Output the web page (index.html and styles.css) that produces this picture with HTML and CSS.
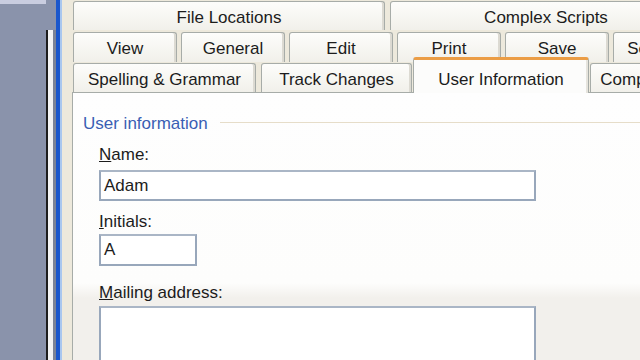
FILE: index.html
```html
<!DOCTYPE html>
<html lang="en">
<head>
    <meta charset="UTF-8">
    <meta name="viewport" content="width=device-width, initial-scale=1.0">
    <title>Options</title>
    <link rel="stylesheet" href="styles.css">
</head>
<body>

    <div class="desktop">
        <div class="desktop-strip"></div>
    </div>

    <div class="back-window"></div>

    <div class="dialog">
        <!-- Onglets sur trois rangées -->
        <div class="tabs">
            <div class="tab-row row-1">
                <div class="tab tab-wide">File Locations</div>
                <div class="tab tab-wide">Complex Scripts</div>
            </div>
            <div class="tab-row row-2">
                <div class="tab tab-small">View</div>
                <div class="tab tab-small">General</div>
                <div class="tab tab-small">Edit</div>
                <div class="tab tab-small">Print</div>
                <div class="tab tab-small">Save</div>
                <div class="tab tab-security">Security</div>
            </div>
            <div class="tab-row row-3">
                <div class="tab tab-spelling">Spelling &amp; Grammar</div>
                <div class="tab tab-track">Track Changes</div>
                <div class="tab tab-active">User Information</div>
                <div class="tab tab-compat">Compatibility</div>
            </div>
        </div>

        <div class="panel">
            <div class="group-title">
                <span>User information</span>
                <div class="group-line"></div>
            </div>

            <div class="fields">
                <label class="field-label label-name"><u>N</u>ame:</label>
                <div class="text-box box-name">Adam</div>

                <label class="field-label label-initials"><u>I</u>nitials:</label>
                <div class="text-box box-initials">A</div>

                <label class="field-label label-address"><u>M</u>ailing address:</label>
                <div class="text-box box-address"></div>
            </div>
        </div>
    </div>

</body>
</html>
```

FILE: styles.css
```css
body {
    font-family: 'Liberation Sans', Arial, sans-serif;
    font-size: 17px;
    margin: 0;
    padding: 0;
    width: 640px;
    height: 360px;
    overflow: hidden;
    display: flex;
    background-color: #8a93ab;
    color: #1c1c1c;
}

.desktop {
    width: 46px;
    flex-shrink: 0;
}

.desktop-strip {
    height: 4px;
    background-color: #c9cde0;
}

.back-window {
    width: 5px;
    margin-top: 30px;
    border-left: 2px solid #1e1e1e;
    border-right: 3px solid #7d8496;
    background-color: #f4f4f4;
    flex-shrink: 0;
}

.dialog {
    flex-grow: 1;
    display: flex;
    flex-direction: column;
    border-left: 4px solid #1b57cc;
    box-shadow: inset 2px 0 0 #a9c7ef;
    background-color: #ede9dc;
    padding-left: 12px;
    overflow: hidden;
}

/* Onglets */
.tabs {
    padding-top: 1px;
    padding-left: 1px;
}

.tab-row {
    display: flex;
    gap: 4px;
}

.row-1 {
    height: 29px;
    gap: 5px;
}

.row-2 {
    height: 30px;
    margin-top: 2px;
}

.row-3 {
    height: 29px;
    margin-top: 1px;
    gap: 5px;
}

.tab {
    flex-shrink: 0;
    box-sizing: border-box;
    border: 1px solid #a7aca8;
    border-bottom: none;
    border-radius: 3px 3px 0 0;
    background: linear-gradient(#fdfdfb, #f1f0ea);
    box-shadow: inset -2px 0 0 #dcdad2;
    text-align: center;
    padding-top: 6px;
    white-space: nowrap;
}

.tab-wide {
    width: 312px;
}

.tab-small {
    width: 104px;
}

.tab-security {
    width: 90px;
}

.tab-spelling {
    width: 183px;
}

.tab-track {
    width: 151px;
}

.tab-active {
    width: 176px;
    height: 36px;
    margin-top: -6px;
    margin-left: -4px;
    margin-right: -4px;
    padding-top: 10px;
    background: #fcfcfb;
    border-top: 3px solid #eb9d45;
    box-shadow: inset -2px 0 0 #e6e4dd;
    position: relative;
    z-index: 1;
}

.tab-compat {
    width: 118px;
}

/* Panneau */
.panel {
    flex-grow: 1;
    border-top: 1px solid #a7aca8;
    border-left: 1px solid #a7aca8;
    background: linear-gradient(#fefefe 0, #fdfdfc 190px, #f2f0ec 205px);
    padding: 21px 0 0 10px;
}

.group-title {
    display: flex;
    align-items: center;
    height: 20px;
    color: #3a5fb4;
}

.group-line {
    flex-grow: 1;
    height: 1px;
    margin-left: 12px;
    margin-top: -4px;
    background-color: #e6ddc9;
}

.fields {
    display: flex;
    flex-direction: column;
    align-items: flex-start;
    padding-left: 16px;
}

.field-label {
    height: 20px;
    line-height: 20px;
}

.field-label u {
    text-decoration-thickness: 1px;
}

.label-name {
    margin-top: 11px;
}

.label-initials {
    margin-top: 11px;
}

.label-address {
    margin-top: 17px;
}

.text-box {
    box-sizing: border-box;
    border: 2px solid #98a7bb;
    border-top-color: #aab6c6;
    background-color: #ffffff;
    padding-left: 3px;
    display: flex;
    align-items: center;
}

.box-name {
    width: 437px;
    height: 31px;
    margin-top: 5px;
}

.box-initials {
    width: 98px;
    height: 32px;
    margin-top: 2px;
}

.box-address {
    width: 437px;
    height: 80px;
    margin-top: 3px;
}
```
